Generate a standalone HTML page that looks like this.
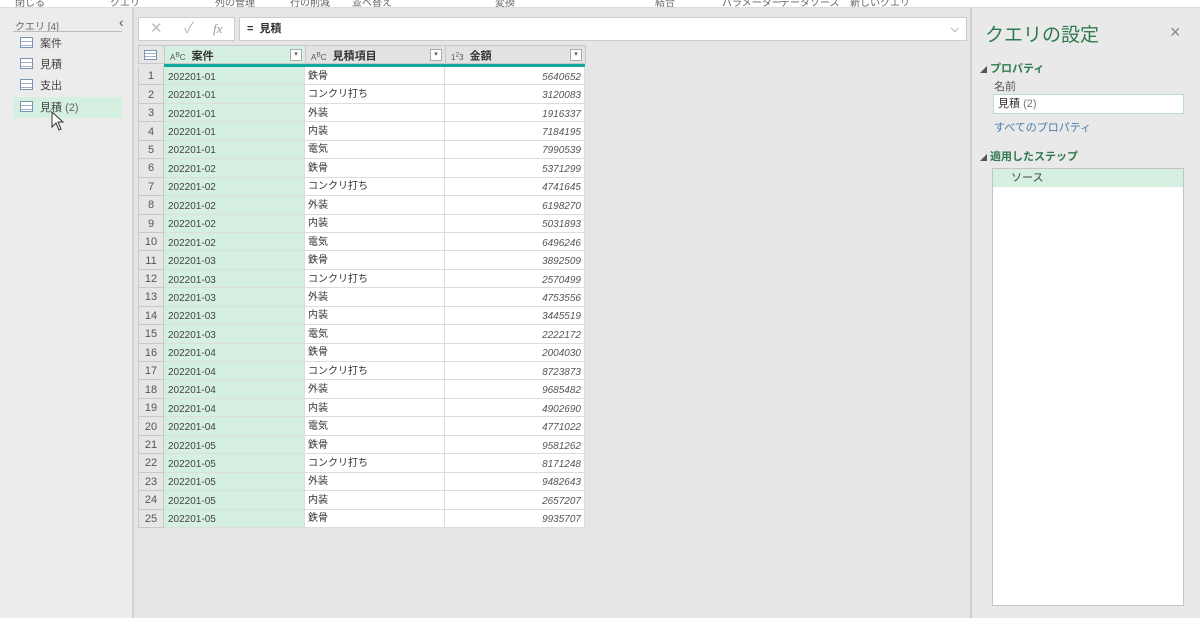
<!DOCTYPE html>
<html><head><meta charset="utf-8">
<style>
*{box-sizing:border-box;margin:0;padding:0}
body{width:1200px;height:618px;overflow:hidden;background:#e6e6e6;font-family:"Liberation Sans","Noto Sans CJK JP",sans-serif;font-size:11px;color:#333;position:relative}
.abs{position:absolute}
.top{left:0;top:0;width:1200px;height:8px;background:#fff;border-bottom:1px solid #ddd;overflow:hidden}
.top span{position:absolute;top:-6px;font-size:10px;color:#666}
.left{left:0;top:8px;width:134px;height:610px;background:#ececec;border-right:2px solid #d2d2d2}
.qi{position:absolute;left:20px;font-size:11px;color:#444}
.qi i{position:absolute;left:0;top:2px;width:13px;height:11px;border:1px solid #7a93b5;background:repeating-linear-gradient(#fff 0 3px,#9fb1c9 3px 4px)}
.qi b{font-weight:normal;margin-left:20px}
.tbl{left:138px;top:45px}
.hd{position:absolute;top:0;height:19px;background:#e2e2e2;border:1px solid #c8c8c8;font-weight:bold;font-size:11px;line-height:17px;padding-left:5px}
.hd .dd{position:absolute;right:3px;top:3px;width:12px;height:12px;background:#fff;border:1px solid #aaa;font-size:7px;line-height:10px;text-align:center;font-weight:normal;color:#555}
.ty{font-size:8px;font-weight:normal;color:#555;margin-right:6px}
.teal{position:absolute;left:26px;top:19px;width:421px;height:3px;background:#13a89e}
.r{position:absolute;left:0;height:18.44px;width:447px}
.c{position:absolute;top:0;height:100%;border-right:1px solid #ddd;border-bottom:1px solid #ddd;font-size:10px;display:flex;align-items:center}
.n,.a,.d{font-family:"Liberation Sans",sans-serif;padding-top:3px}
.b{padding-bottom:3px}
.n{left:0;width:26px;background:#e6e6e6;border:1px solid #c8c8c8;border-top:none;justify-content:center;color:#555;font-size:11px;padding-top:1px}
.a{left:26px;width:141px;background:#d5efe1;padding-left:4px;color:#444}
.b{left:167px;width:140px;background:#fff;padding-left:3px}
.d{left:307px;width:140px;background:#fff;justify-content:flex-end;padding-right:3px;font-style:italic;color:#555}
.right{left:970px;top:8px;width:230px;height:610px;background:#e9e9e9;border-left:2px solid #d0d0d0}
.g{color:#2f7a4e}
</style></head><body>
<div class="abs top"><span style="left:15px">閉じる</span><span style="left:110px">クエリ</span><span style="left:215px">列の管理</span><span style="left:290px">行の削減</span><span style="left:352px">並べ替え</span><span style="left:495px">変換</span><span style="left:655px">結合</span><span style="left:722px">パラメーター</span><span style="left:780px">データソース</span><span style="left:850px">新しいクエリ</span></div>
<div class="abs left">
<div class="abs" style="left:15px;top:10px;font-size:10px;color:#666">クエリ [4]</div>
<div class="abs" style="left:119px;top:6px;font-size:14px;color:#555">‹</div>
<div class="abs" style="left:13px;top:23px;width:109px;height:1px;background:#bbb"></div>
<div class="qi" style="top:27px"><i></i><b>案件</b></div>
<div class="qi" style="top:48px"><i></i><b>見積</b></div>
<div class="qi" style="top:69px"><i></i><b>支出</b></div>
<div class="abs" style="left:13px;top:89px;width:109px;height:21px;background:#d5efe1"></div>
<div class="qi" style="top:91px"><i></i><b>見積 <span style="color:#666">(2)</span></b></div>
<svg class="abs" style="left:51px;top:103px" width="14" height="22"><path d="M1 1 L1 16 L5 12 L8 19 L10 18 L7 11 L12 11 Z" fill="#fff" stroke="#333"/></svg>
</div>
<div class="abs" style="left:138px;top:17px;width:97px;height:24px;background:#fff;border:1px solid #ccc;color:#bbb;font-size:15px;line-height:22px">
<span class="abs" style="left:11px">✕</span><span class="abs" style="left:45px">✓</span><span class="abs" style="left:74px;font-family:'Liberation Serif',serif;font-style:italic;font-size:13px;color:#999">fx</span></div>
<div class="abs" style="left:239px;top:17px;width:728px;height:24px;background:#fff;border:1px solid #ccc;line-height:22px;padding-left:7px;font-size:11px;font-weight:bold;color:#333">=&nbsp; 見積<span class="abs" style="right:7px;top:0;font-weight:normal;color:#555">⌵</span></div>
<div class="abs tbl">
<div class="hd" style="left:0;width:27px;padding:0;background:#e6e6e6"><span style="position:absolute;left:5px;top:4px;width:13px;height:10px;border:1px solid #7a93b5;background:repeating-linear-gradient(#fff 0 2px,#9fb1c9 2px 3px)"></span></div>
<div class="hd" style="left:26px;width:142px;background:#d5efe1"><span class="ty">A<sup>B</sup>C</span>案件<span class="dd">▾</span></div>
<div class="hd" style="left:167px;width:141px"><span class="ty">A<sup>B</sup>C</span>見積項目<span class="dd">▾</span></div>
<div class="hd" style="left:307px;width:141px"><span class="ty">1<sup>2</sup>3</span>金額<span class="dd">▾</span></div>
<div class="teal"></div>
<div style="position:absolute;left:0;top:22px">
<div class="r" style="top:0px"><div class="c n">1</div><div class="c a">202201-01</div><div class="c b">鉄骨</div><div class="c d">5640652</div></div>
<div class="r" style="top:18.44px"><div class="c n">2</div><div class="c a">202201-01</div><div class="c b">コンクリ打ち</div><div class="c d">3120083</div></div>
<div class="r" style="top:36.88px"><div class="c n">3</div><div class="c a">202201-01</div><div class="c b">外装</div><div class="c d">1916337</div></div>
<div class="r" style="top:55.32px"><div class="c n">4</div><div class="c a">202201-01</div><div class="c b">内装</div><div class="c d">7184195</div></div>
<div class="r" style="top:73.76px"><div class="c n">5</div><div class="c a">202201-01</div><div class="c b">電気</div><div class="c d">7990539</div></div>
<div class="r" style="top:92.2px"><div class="c n">6</div><div class="c a">202201-02</div><div class="c b">鉄骨</div><div class="c d">5371299</div></div>
<div class="r" style="top:110.64px"><div class="c n">7</div><div class="c a">202201-02</div><div class="c b">コンクリ打ち</div><div class="c d">4741645</div></div>
<div class="r" style="top:129.08px"><div class="c n">8</div><div class="c a">202201-02</div><div class="c b">外装</div><div class="c d">6198270</div></div>
<div class="r" style="top:147.52px"><div class="c n">9</div><div class="c a">202201-02</div><div class="c b">内装</div><div class="c d">5031893</div></div>
<div class="r" style="top:165.96px"><div class="c n">10</div><div class="c a">202201-02</div><div class="c b">電気</div><div class="c d">6496246</div></div>
<div class="r" style="top:184.4px"><div class="c n">11</div><div class="c a">202201-03</div><div class="c b">鉄骨</div><div class="c d">3892509</div></div>
<div class="r" style="top:202.84px"><div class="c n">12</div><div class="c a">202201-03</div><div class="c b">コンクリ打ち</div><div class="c d">2570499</div></div>
<div class="r" style="top:221.28px"><div class="c n">13</div><div class="c a">202201-03</div><div class="c b">外装</div><div class="c d">4753556</div></div>
<div class="r" style="top:239.72px"><div class="c n">14</div><div class="c a">202201-03</div><div class="c b">内装</div><div class="c d">3445519</div></div>
<div class="r" style="top:258.16px"><div class="c n">15</div><div class="c a">202201-03</div><div class="c b">電気</div><div class="c d">2222172</div></div>
<div class="r" style="top:276.6px"><div class="c n">16</div><div class="c a">202201-04</div><div class="c b">鉄骨</div><div class="c d">2004030</div></div>
<div class="r" style="top:295.04px"><div class="c n">17</div><div class="c a">202201-04</div><div class="c b">コンクリ打ち</div><div class="c d">8723873</div></div>
<div class="r" style="top:313.48px"><div class="c n">18</div><div class="c a">202201-04</div><div class="c b">外装</div><div class="c d">9685482</div></div>
<div class="r" style="top:331.92px"><div class="c n">19</div><div class="c a">202201-04</div><div class="c b">内装</div><div class="c d">4902690</div></div>
<div class="r" style="top:350.36px"><div class="c n">20</div><div class="c a">202201-04</div><div class="c b">電気</div><div class="c d">4771022</div></div>
<div class="r" style="top:368.8px"><div class="c n">21</div><div class="c a">202201-05</div><div class="c b">鉄骨</div><div class="c d">9581262</div></div>
<div class="r" style="top:387.24px"><div class="c n">22</div><div class="c a">202201-05</div><div class="c b">コンクリ打ち</div><div class="c d">8171248</div></div>
<div class="r" style="top:405.68px"><div class="c n">23</div><div class="c a">202201-05</div><div class="c b">外装</div><div class="c d">9482643</div></div>
<div class="r" style="top:424.12px"><div class="c n">24</div><div class="c a">202201-05</div><div class="c b">内装</div><div class="c d">2657207</div></div>
<div class="r" style="top:442.56px"><div class="c n">25</div><div class="c a">202201-05</div><div class="c b">鉄骨</div><div class="c d">9935707</div></div>
</div>
</div>
<div class="abs right">
<div class="abs g" style="left:13px;top:12px;font-size:19px">クエリの設定</div>
<div class="abs" style="left:198px;top:14px;font-size:18px;color:#888">×</div>
<div class="abs g" style="left:8px;top:52px;font-weight:bold"><span style="font-size:7px;color:#555">◢</span> プロパティ</div>
<div class="abs" style="left:22px;top:70px;color:#555">名前</div>
<div class="abs" style="left:21px;top:86px;width:191px;height:20px;background:#fff;border:1px solid #bcdcc8;line-height:18px;padding-left:4px">見積 <span style="color:#777">(2)</span></div>
<div class="abs" style="left:22px;top:111px;color:#4a7cad">すべてのプロパティ</div>
<div class="abs g" style="left:8px;top:140px;font-weight:bold"><span style="font-size:7px;color:#555">◢</span> 適用したステップ</div>
<div class="abs" style="left:20px;top:160px;width:192px;height:438px;background:#fff;border:1px solid #c4c4c4">
<div style="height:18px;background:#d5efe1;padding-left:18px;line-height:18px;color:#444;font-size:11px">ソース</div></div>
</div>
</body></html>
